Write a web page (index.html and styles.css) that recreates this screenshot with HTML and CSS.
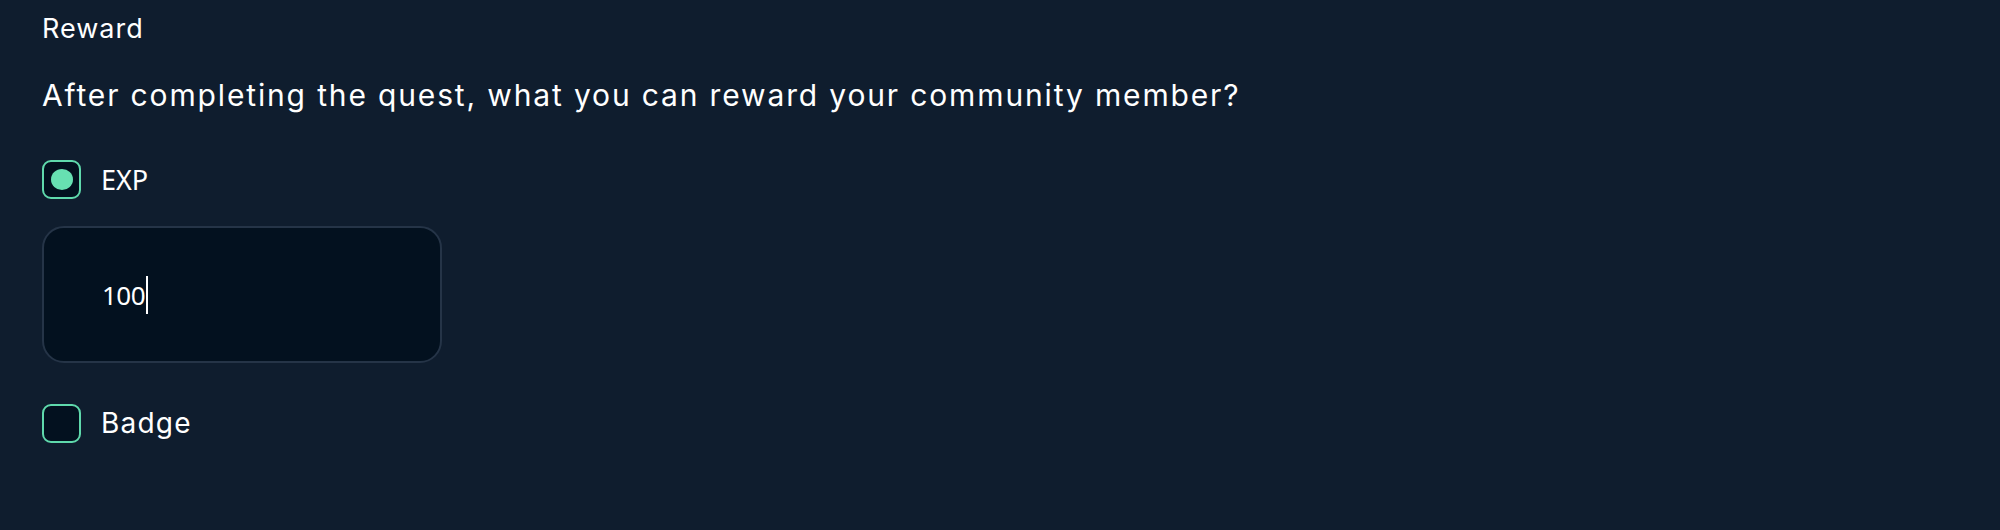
FILE: index.html
```html
<!DOCTYPE html>
<html lang="en">
<head>
<meta charset="utf-8">
<title>Reward</title>
<link rel="stylesheet" href="styles.css">
</head>
<body>
<main class="reward">
  <div class="label">Reward</div>
  <p class="question">After completing the quest, what you can reward your community member?</p>
  <label class="option">
    <span class="check is-checked"><span class="dot"></span></span>
    <span class="opt-label opt-exp">EXP</span>
  </label>
  <div class="field">
    <span class="value">100</span><span class="caret"></span>
  </div>
  <label class="option">
    <span class="check"></span>
    <span class="opt-label">Badge</span>
  </label>
</main>
</body>
</html>
```

FILE: styles.css
```css
html, body {
  margin: 0;
  padding: 0;
  background: #0f1d2e;
  height: 100%;
}
body {
  color: #ffffff;
  font-family: "Inter", "Noto Sans", sans-serif;
}
.reward {
  display: flex;
  flex-direction: column;
  align-items: flex-start;
  padding: 9px 42px 0;
}
.label {
  font-size: 27px;
  line-height: 40px;
  letter-spacing: 1px;
}
.question {
  margin: 26px 0 0;
  font-size: 30px;
  line-height: 40px;
  letter-spacing: 1.85px;
}
.option {
  display: flex;
  align-items: center;
  gap: 20px;
  margin-top: 45px;
}
.check {
  box-sizing: border-box;
  width: 39px;
  height: 39px;
  border: 2px solid #5fd9ac;
  border-radius: 9px;
  background: #03111f;
  display: flex;
  align-items: center;
  justify-content: center;
}
.dot {
  width: 22px;
  height: 21px;
  border-radius: 50%;
  background: #67e0b2;
}
.opt-label {
  font-size: 28px;
  line-height: 39px;
  letter-spacing: 1.2px;
}
.opt-exp {
  font-family: "Noto Sans", sans-serif;
  font-size: 27px;
  letter-spacing: 0;
}
.field {
  box-sizing: border-box;
  width: 400px;
  height: 137px;
  margin-top: 27px;
  border: 2px solid #253447;
  border-radius: 22px;
  background: #03111f;
  display: flex;
  align-items: center;
  padding-left: 58px;
}
.value {
  font-family: "Noto Sans", sans-serif;
  font-size: 26px;
  letter-spacing: -0.5px;
}
.caret {
  width: 2px;
  height: 38px;
  background: #ffffff;
  margin-left: 1px;
}
.field + .option {
  margin-top: 41px;
}
```
